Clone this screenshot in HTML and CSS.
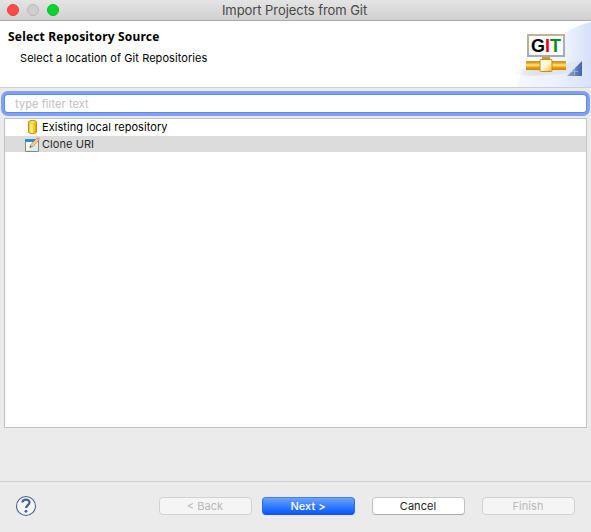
FILE: index.html
```html
<!DOCTYPE html>
<html lang="en">
<head>
<meta charset="utf-8">
<title>Import Projects from Git</title>
<link rel="stylesheet" href="styles.css">
</head>
<body>
<main class="window">
  <header class="titlebar">
    <div class="lights"><i class="light red"></i><i class="light gray"></i><i class="light green"></i></div>
    <span class="title">Import Projects from Git</span>
  </header>
  <section class="banner">
    <div class="banner-text">
      <h1><span>Select Repository Source</span></h1>
      <p><span>Select a location of Git Repositories</span></p>
    </div>
    <svg class="banner-art" width="101" height="66" viewBox="490 21 101 66">
      <defs>
        <linearGradient id="sky" x1="0" x2="1"><stop offset="0" stop-color="#f5f7ff"/><stop offset=".5" stop-color="#edf1fe"/><stop offset="1" stop-color="#d8e2fb"/></linearGradient>
        <linearGradient id="arc" x1="0" x2="1" y1="0" y2="0"><stop offset="0" stop-color="#fafcff"/><stop offset=".5" stop-color="#edf2fe"/><stop offset="1" stop-color="#d5e0fa"/></linearGradient>
        <linearGradient id="gold" x1="0" x2="0" y1="0" y2="1"><stop offset="0" stop-color="#d08e10"/><stop offset=".25" stop-color="#e9a91c"/><stop offset=".45" stop-color="#ffe98a"/><stop offset=".7" stop-color="#e6a212"/><stop offset="1" stop-color="#c98200"/></linearGradient>
        <linearGradient id="box" x1="0" x2="1" y1="0" y2="1"><stop offset="0" stop-color="#fff"/><stop offset=".5" stop-color="#fff6d0"/><stop offset="1" stop-color="#f2b92f"/></linearGradient>
        <linearGradient id="frame" x1="0" x2="0" y1="0" y2="1"><stop offset="0" stop-color="#bdb591"/><stop offset="1" stop-color="#9cabc1"/></linearGradient>
        <linearGradient id="tri" x1="0" x2="1"><stop offset="0" stop-color="#8fabd6"/><stop offset="1" stop-color="#3f66a8"/></linearGradient>
        <linearGradient id="shade" x1="0" x2="1"><stop offset="0" stop-color="#d9dce4" stop-opacity="0"/><stop offset=".3" stop-color="#dfe2e9"/><stop offset="1" stop-color="#d9dfec" stop-opacity=".3"/></linearGradient>
      </defs>
      <path d="M517 87C518 75 525 66 540 61H591V87Z" fill="url(#sky)"/>
      <path d="M541 61C549 42 566 28 591 22V66H541Z" fill="url(#arc)"/>
      <path d="M512 74L530 66L566 63L591 58V67L562 74L530 76Z" fill="url(#shade)"/>
      <rect x="528" y="35" width="36" height="21" fill="#fcfdff" stroke="url(#frame)" stroke-width="2"/>
      <text class="git" font-size="19" x="531" y="52" textLength="30" lengthAdjust="spacingAndGlyphs">G<tspan fill="#e4001b">I</tspan><tspan fill="#078b19">T</tspan></text>
      <path d="M542 57H550V60H542Z" fill="#d99a19"/>
      <rect x="526" y="61" width="40" height="9" fill="url(#gold)"/>
      <rect x="540" y="59.5" width="12" height="12" rx="1" fill="url(#box)" stroke="#cb8b10"/>
      <path d="M582 61V76H567Z" fill="url(#tri)"/>
      <path d="M574.5 68V75M571 71.5H578" stroke="#d5e1f2" opacity=".45"/>
    </svg>
  </section>
  <section class="content">
    <input class="filter" type="text" placeholder="type filter text" aria-label="Filter">
    <div class="tree">
      <div class="row">
        <svg width="16" height="16" viewBox="0 0 16 16"><defs><linearGradient id="yellow"><stop stop-color="#e9b500"/><stop offset=".35" stop-color="#fff6a0"/><stop offset=".6" stop-color="#f8dc2a"/><stop offset="1" stop-color="#d89a00"/></linearGradient></defs><path d="M3.5 3V13C3.5 15 11.5 15 11.5 13V3C11.5 1 3.5 1 3.5 3Z" fill="url(#yellow)" stroke="#c79200"/><ellipse cx="7.5" cy="3.2" rx="3.3" ry="1.2" fill="#ffef86" stroke="#d9a913" stroke-width=".7"/></svg>
        <span>Existing local repository</span>
      </div>
      <div class="row selected">
        <svg width="16" height="16" viewBox="0 0 16 16"><path d="M.5 3.5H13.5V15.5H.5Z" fill="#f2faff" stroke="#8c8b70"/><path d="M0 3H14V6H0Z" fill="#3588c9"/><path d="M1 15L13 8V15Z" fill="#d7ecf8"/><path d="M5 11.2L6 8.5L11.8 2.3L14 4.2L8.2 10.4Z" fill="#f7cf95" stroke="#ad7445" stroke-width=".7"/><path d="M11.5 2.2L13 .7L15.2 2.7L13.8 4.3Z" fill="#e2a092"/><path d="M4.5 11.7L5.2 9.7L6.6 11Z" fill="#424446"/></svg>
        <span>Clone URI</span>
      </div>
    </div>
  </section>
  <footer class="footer">
    <svg class="help" width="22" height="22" viewBox="0 0 22 22"><circle cx="11" cy="11" r="9.5" fill="#f4f5f7" stroke="#4b6690" stroke-width="1.1"/><path d="M7.3 7.5C7.7 3.9 14.5 3.7 14.5 7.4C14.5 10 11 10.2 11 13.1" fill="none" stroke="#465f92" stroke-width="2.2"/><circle cx="11" cy="16.3" r="1.4" fill="#465f92"/></svg>
    <div class="buttons">
      <button disabled>&lt; Back</button>
      <button class="primary">Next &gt;</button>
      <button class="cancel">Cancel</button>
      <button class="finish" disabled>Finish</button>
    </div>
  </footer>
</main>
</body>
</html>
```
FILE: styles.css
```css
* { box-sizing: border-box; }
body { margin: 0; background: #ebebeb; font: 11px/16px Inter, "Liberation Sans", sans-serif; color: #000; }
.window { width: 591px; height: 532px; display: flex; flex-direction: column; overflow: hidden; }
.titlebar { height: 21px; display: grid; grid-template-columns: 80px 1fr 82px; align-items: center; background: linear-gradient(#e4e4e4, #d0d0d0); border-bottom: 1px solid #aaa; }
.lights { display: flex; gap: 8px; padding-left: 7px; }
.light { width: 12px; height: 12px; border-radius: 50%; border: 1px solid #b9b9b9; background: #cecece; }
.red { background: #ff4b47; border-color: #e5423e; }
.green { background: #05d42d; border-color: #08bb29; }
.title { text-align: center; font-size: 13px; color: #484848; letter-spacing: -.06px; }
.banner { height: 67px; display: flex; justify-content: space-between; background: #fff; border-bottom: 1px solid #cfcfcf; }
.banner-text { padding: 7px 0 0 8px; }
h1 { margin: 0; font: bold 12px/18px "Noto Sans", sans-serif; color: #000; letter-spacing: .18px; }
p { margin: 4px 0 0 12px; letter-spacing: .07px; }
.banner-art { display: block; }
.git { font-family: "Liberation Sans", sans-serif; font-weight: bold; }
.content { padding: 7px 4px 0; }
.filter { display: block; width: 581px; height: 17px; margin: 0 0 0 1px; padding: 0 10px; border: 0; outline: 0; border-radius: 3px; background: #fff; box-shadow: 0 0 0 1px #6388e4, 0 0 0 4px #7da1f6; font: 11px Inter, sans-serif; letter-spacing: .08px; }
.filter::placeholder { color: #c0c0c0; opacity: 1; }
.tree { height: 310px; margin-top: 6px; border: 1px solid #c2c2c2; background: #fff; }
.row { height: 16px; display: flex; align-items: center; gap: 1px; padding-left: 20px; letter-spacing: .06px; }
.row:first-child { height: 17px; padding-bottom: 1px; }
.row svg { display: block; }
.selected { background: #dcdcdc; color: #2b2b2b; }
.footer { height: 51px; margin-top: auto; border-top: 1px solid #d1d1d1; display: flex; justify-content: space-between; padding: 13px 16px 0 15px; }
.buttons { display: flex; padding-top: 2px; }
button { width: 93px; height: 18px; margin: 0; padding: 0 1px 0 0; border: 1px solid #d2d2d2; border-radius: 4px; background: #f5f5f5; color: #b8b8b8; font: 11px/15px Inter, sans-serif; letter-spacing: .05px; }
.primary { margin-left: 10px; color: #fff; font-weight: 500; border-color: #3e7df3 #246cf4 #1554e4; background: linear-gradient(#6aa4ff, #0857ff); }
.cancel { margin-left: 17px; color: #222; background: #fff; border-color: #c8c8c8 #c0c0c0 #aaa; }
.finish { margin-left: 17px; }
```
